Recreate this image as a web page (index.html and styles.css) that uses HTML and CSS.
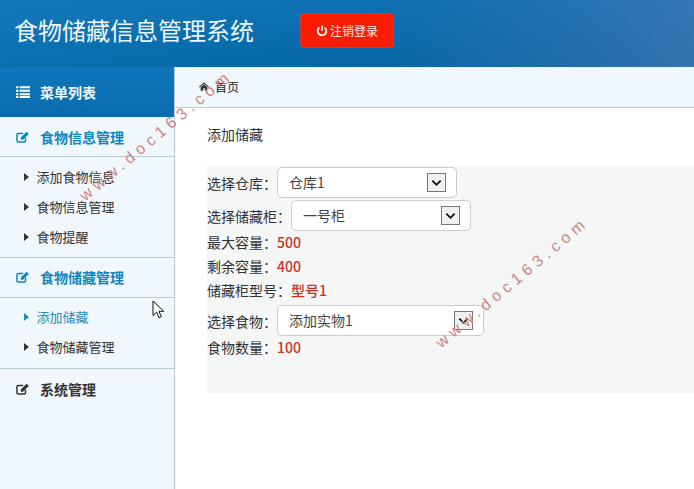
FILE: index.html
```html
<!DOCTYPE html>
<html lang="zh">
<head>
<meta charset="utf-8">
<title>食物储藏信息管理系统</title>
<link rel="stylesheet" href="styles.css">
</head>
<body>
<header class="topbar">
  <h1 class="brand">食物储藏信息管理系统</h1>
  <a class="logout">
    <svg class="logout-icon" viewBox="0 0 12 12"><path d="M3.4 2.6a4.3 4.3 0 1 0 5.2 0" fill="none" stroke="#fff" stroke-width="1.8"/><path d="M6 .8v5" stroke="#fff" stroke-width="1.8"/></svg>
    注销登录
  </a>
</header>
<div class="shell">
  <aside class="sidebar">
    <div class="menu-head">
      <svg class="ico" viewBox="0 0 14 12"><path d="M0 1.2h2.4M0 4.7h2.4M0 8.2h2.4M0 11h2.4M3.6 1.2H14M3.6 4.7H14M3.6 8.2H14M3.6 11H14" stroke="#fff" stroke-width="2" fill="none"/></svg>
      <span>菜单列表</span>
    </div>
    <div class="group group-on">
      <svg class="ico" viewBox="0 0 14 12"><path d="M9.5 6.8v3a1.2 1.2 0 0 1-1.2 1.2H2.2A1.2 1.2 0 0 1 1 9.8V3.7a1.2 1.2 0 0 1 1.2-1.2h5" fill="none" stroke="currentColor" stroke-width="1.5"/><path d="M4.8 6.6 10.6.8l2.2 2.2L7 8.8H4.8z" fill="currentColor"/></svg>
      <span>食物信息管理</span>
    </div>
    <ul class="items">
      <li>添加食物信息</li>
      <li>食物信息管理</li>
      <li>食物提醒</li>
    </ul>
    <div class="group group-on group-raised">
      <svg class="ico" viewBox="0 0 14 12"><path d="M9.5 6.8v3a1.2 1.2 0 0 1-1.2 1.2H2.2A1.2 1.2 0 0 1 1 9.8V3.7a1.2 1.2 0 0 1 1.2-1.2h5" fill="none" stroke="currentColor" stroke-width="1.5"/><path d="M4.8 6.6 10.6.8l2.2 2.2L7 8.8H4.8z" fill="currentColor"/></svg>
      <span>食物储藏管理</span>
    </div>
    <ul class="items items-raised">
      <li class="active">添加储藏</li>
      <li>食物储藏管理</li>
    </ul>
    <div class="group group-last group-raised">
      <svg class="ico" viewBox="0 0 14 12"><path d="M9.5 6.8v3a1.2 1.2 0 0 1-1.2 1.2H2.2A1.2 1.2 0 0 1 1 9.8V3.7a1.2 1.2 0 0 1 1.2-1.2h5" fill="none" stroke="currentColor" stroke-width="1.5"/><path d="M4.8 6.6 10.6.8l2.2 2.2L7 8.8H4.8z" fill="currentColor"/></svg>
      <span>系统管理</span>
    </div>
  </aside>
  <main class="content">
    <div class="crumb">
      <svg class="home" viewBox="0 0 12 10"><path d="M6 0 0 5.4l.7.7L6 1.4l5.3 4.7.7-.7zM2 6v4h3V7h2v3h3V6L6 2.4z" fill="#333"/></svg>
      <span>首页</span>
    </div>
    <h2 class="page-title">添加储藏</h2>
    <form class="panel">
      <div class="row row-select">
        <label>选择仓库：</label>
        <div class="select s180"><select><option>仓库1</option></select><span class="arrow"><svg viewBox="0 0 12 8"><path d="m1.5 1.5 4.5 4.5 4.5-4.5" fill="none" stroke="#000" stroke-width="1.8"/></svg></span></div>
      </div>
      <div class="row row-select">
        <label>选择储藏柜：</label>
        <div class="select s180"><select><option>一号柜</option></select><span class="arrow"><svg viewBox="0 0 12 8"><path d="m1.5 1.5 4.5 4.5 4.5-4.5" fill="none" stroke="#000" stroke-width="1.8"/></svg></span></div>
      </div>
      <div class="row row-text row-first"><label>最大容量：</label><span class="value">500</span></div>
      <div class="row row-text"><label>剩余容量：</label><span class="value">400</span></div>
      <div class="row row-text"><label>储藏柜型号：</label><span class="value">型号1</span></div>
      <div class="row row-select row-food">
        <label>选择食物：</label>
        <div class="select s207"><select><option>添加实物1</option></select><span class="arrow"><svg viewBox="0 0 12 8"><path d="m1.5 1.5 4.5 4.5 4.5-4.5" fill="none" stroke="#000" stroke-width="1.8"/></svg></span></div>
      </div>
      <div class="row row-text row-last"><label>食物数量：</label><span class="value">100</span></div>
    </form>
  </main>
</div>
<div class="mark mark-a">www.doc163.com</div>
<div class="mark mark-b">www.doc163.com</div>
<svg class="cursor" viewBox="0 0 13 19"><path d="M1 1v14.5l3.6-3.3 2.4 5.6 2.4-1-2.4-5.5h4.8z" fill="#fff" stroke="#111" stroke-width="1"/></svg>
</body>
</html>
```
FILE: styles.css
```css
* { box-sizing: border-box; }
html, body { margin: 0; height: 100%; }
body {
  width: 694px;
  height: 489px;
  overflow: hidden;
  position: relative;
  font-family: "Noto Sans CJK SC", "Liberation Sans", sans-serif;
  color: #333;
  background: #fff;
}
.topbar {
  height: 67px;
  display: flex;
  align-items: center;
  padding: 0 0 6px 14px;
  background: linear-gradient(172deg, #1579bc 0%, #0c6fb0 35%, #04609a 100%);
  position: relative;
}
.topbar::after {
  content: "";
  position: absolute;
  inset: 0;
  background: linear-gradient(90deg, rgba(90,130,190,0) 55%, rgba(90,130,190,.55) 100%);
}
.brand {
  margin: 0 0 2px;
  font-size: 24px;
  line-height: 32px;
  font-weight: 400;
  color: #eef7fb;
}
.logout {
  margin-left: 46px;
  width: 94px;
  height: 35px;
  border-radius: 4px;
  background: #f71d03;
  border: 1px solid #e2392c;
  color: #fbeae6;
  font-size: 12px;
  display: flex;
  align-items: center;
  justify-content: center;
  gap: 2px;
}
.logout-icon { width: 12px; height: 12px; }
.shell { display: flex; height: 422px; }
.sidebar {
  width: 175px;
  flex: none;
  background: #f0f7fd;
  border-right: 1px solid #b9cdd8;
}
.menu-head {
  height: 50px;
  display: flex;
  align-items: center;
  gap: 10px;
  padding-left: 16px;
  background: linear-gradient(180deg, #0f76bb, #0a6cad);
  color: #eef6fb;
  font-size: 14px;
  font-weight: 700;
}
.ico { width: 14px; height: 12px; flex: none; }
.group {
  height: 40px;
  display: flex;
  align-items: center;
  gap: 10px;
  padding-left: 16px;
  font-size: 14px;
  font-weight: 700;
  border-bottom: 1px solid #b9cdd8;
}
.group-raised { padding-bottom: 2px; }
.group-on { color: #0d86bd; }
.group-last { color: #333; height: 41px; border-bottom: 0; }
.items {
  list-style: none;
  margin: 0;
  padding: 5px 0;
  border-bottom: 1px solid #b9cdd8;
}
.items-raised { padding: 4px 0 6px; }
.items li {
  height: 30px;
  line-height: 30px;
  padding-left: 36.5px;
  font-size: 13px;
  color: #333;
  position: relative;
}
.items li::before {
  content: "";
  position: absolute;
  left: 24px;
  top: 11px;
  border-left: 5px solid currentColor;
  border-top: 4px solid transparent;
  border-bottom: 4px solid transparent;
}
.items li.active { color: #1f8fc0; }
.content { flex: 1; min-width: 0; }
.crumb {
  height: 41px;
  display: flex;
  align-items: center;
  gap: 6px;
  background: #f0f7fd;
  border-bottom: 1px solid #b9cdd8;
  padding: 0 0 1px 24px;
  font-size: 12px;
  color: #222;
}
.home { width: 10px; height: 9px; }
.page-title {
  margin: 0;
  padding: 16px 0 0 32px;
  height: 58px;
  font-size: 14px;
  line-height: 20px;
  font-weight: 400;
}
.panel {
  margin-left: 32px;
  height: 227px;
  background: #f5f6f6;
  padding-top: 1px;
}
.row { display: flex; align-items: center; }
.row label { font-size: 14px; color: #333; }
.row-select { height: 31px; margin-bottom: 2px; }
.row-text { height: 24px; padding-bottom: 1px; }
.row-first { height: 23px; margin-top: -2px; }
.row-last { height: 22px; }
.row-food { margin-top: 3px; margin-bottom: 0; }
.value { color: #c8331e; font-size: 14px; font-weight: 500; }
.select { position: relative; height: 31px; }
.s180 { width: 180px; }
.s207 { width: 207px; }
.select select {
  appearance: none;
  -webkit-appearance: none;
  width: 100%;
  height: 100%;
  border: 1px solid #ccc;
  border-radius: 5px;
  background: #fff;
  padding: 0 11px 2px;
  font: 14px "Noto Sans CJK SC", "Liberation Sans", sans-serif;
  color: #444;
}
.arrow {
  position: absolute;
  right: 11px;
  top: 6px;
  width: 19px;
  height: 19px;
  background: #f0f0f0;
  border: 1px solid #777;
  display: flex;
  align-items: center;
  justify-content: center;
}
.arrow svg { width: 11px; height: 8px; }
.mark {
  position: absolute;
  color: #cf8486;
  font-family: "Liberation Sans", sans-serif;
  font-size: 16px;
  letter-spacing: 4.9px;
  white-space: nowrap;
  transform: rotate(-40deg);
  transform-origin: left center;
}
.mark-a { left: 82px; top: 189px; }
.mark-b { left: 438px; top: 336px; }
.cursor { position: absolute; left: 152px; top: 300px; width: 13px; height: 19px; }
```
